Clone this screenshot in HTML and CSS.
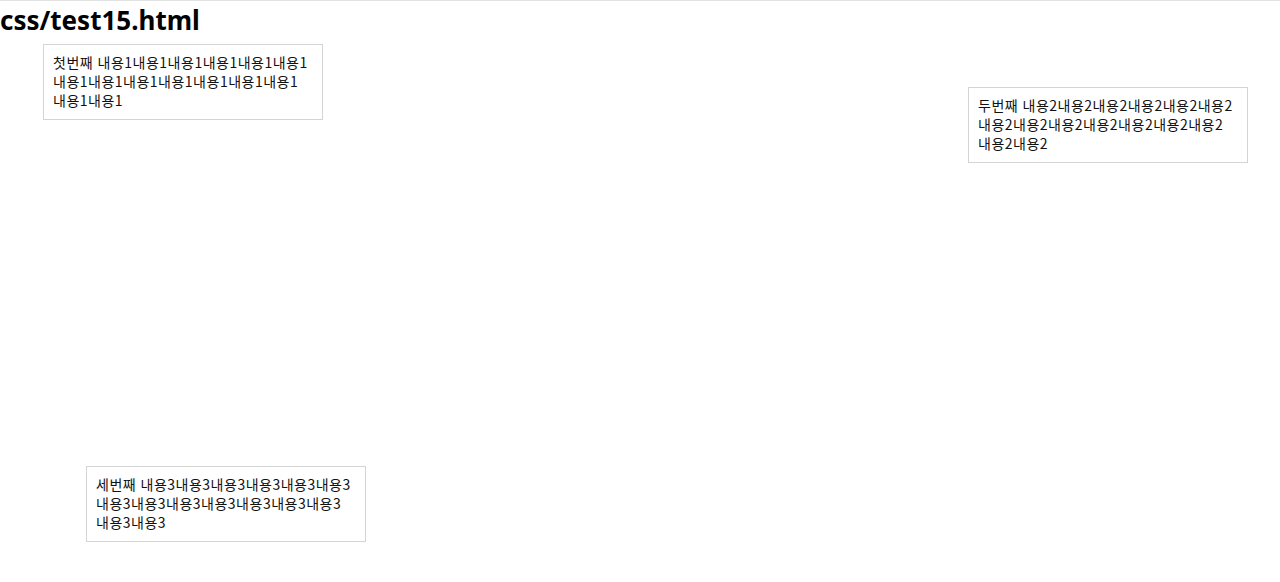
FILE: index.html
```html
<!DOCTYPE html>
<html lang="ko">
<head>
<meta charset="utf-8">
<title>css/test15.html</title>
<link rel="stylesheet" href="styles.css">
</head>
<body>
<h1 class="title">css/test15.html</h1>
<div class="box box-first">첫번째 내용1내용1내용1내용1내용1내용1내용1내용1내용1내용1내용1내용1내용1내용1내용1</div>
<div class="box box-second">두번째 내용2내용2내용2내용2내용2내용2내용2내용2내용2내용2내용2내용2내용2내용2내용2</div>
<div class="box box-third">세번째 내용3내용3내용3내용3내용3내용3내용3내용3내용3내용3내용3내용3내용3내용3내용3</div>
</body>
</html>
```
FILE: styles.css
```css
html, body {
  margin: 0;
  padding: 0;
  height: 100%;
}
body {
  position: relative;
  border-top: 1px solid #e2e2e2;
  box-sizing: border-box;
  background: #fff;
  color: #111;
  font-family: "Noto Sans", "Noto Sans CJK KR", sans-serif;
}
.title {
  margin: 0;
  font-size: 26px;
  line-height: 38px;
  font-weight: 700;
  color: #000;
}
.box {
  position: absolute;
  box-sizing: border-box;
  width: 280px;
  height: 76px;
  padding: 8px 13px 8px 9px;
  border: 1px solid #d4d4d4;
  font-family: "Noto Sans CJK KR", sans-serif;
  font-size: 14px;
  letter-spacing: 0.5px;
  line-height: 19px;
  color: #111;
}
.box-first { left: 43px; top: 43px; }
.box-second { left: 968px; top: 86px; }
.box-third { left: 86px; top: 465px; }
```
